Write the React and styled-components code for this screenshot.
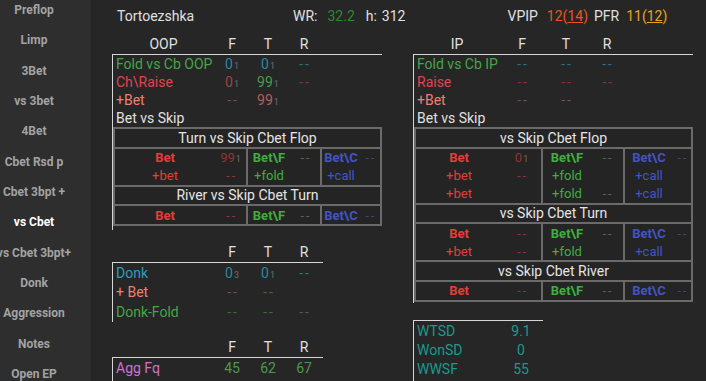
import React from 'react'
import styled, { createGlobalStyle } from 'styled-components'

const GlobalStyle = createGlobalStyle`
  html, body {
    margin: 0;
    padding: 0;
    background: #262626;
  }
  body {
    font-family: Roboto, "Liberation Sans", sans-serif;
    overflow: hidden;
  }
`

const Page = styled.div`
  display: flex;
  width: 706px;
  height: 381px;
  overflow: hidden;
  background: #262626;
  color: #e0e0e0;
`

const Sidebar = styled.nav`
  flex: 0 0 91px;
  background: #2e2e2e;
  border-right: 1px solid #232323;
  overflow: hidden;
`

const NavList = styled.div`
  display: flex;
  flex-direction: column;
  margin-top: -5px;
`

const NavItem = styled.div`
  width: 68px;
  height: 30.33px;
  display: flex;
  align-items: center;
  justify-content: center;
  white-space: nowrap;
  font-size: 12px;
  font-weight: 700;
  color: ${p => (p.$active ? '#ffffff' : '#a3a3a3')};
`

const Main = styled.main`
  flex: 1;
  padding: 6px 0 0 20px;
`

const TopBar = styled.div`
  display: flex;
  align-items: center;
  height: 20px;
  padding-left: 5px;
  font-size: 14px;
  white-space: nowrap;
`

const Name = styled.span`
  width: 176px;
  color: #e0e0e0;
`

const Stat = styled.span`
  margin-left: ${p => p.$ml || 0}px;
  color: ${p => p.$c || '#e0e0e0'};
`

const U = styled.span`
  text-decoration: underline;
`

const Columns = styled.div`
  display: flex;
  align-items: flex-start;
  gap: 31px;
  margin-top: 8px;
`

const Column = styled.div`
  display: flex;
  flex-direction: column;
  width: ${p => p.$w}px;
`

const HeadRow = styled.div`
  display: grid;
  grid-template-columns: ${p => p.$cols};
  height: 20px;
  align-items: center;
  padding-left: 1px;
  margin-top: ${p => p.$mt || 0}px;
  text-align: center;
  font-size: 14px;
  color: #e0e0e0;
`

const Box = styled.div`
  border-top: 1px solid #d6d6d6;
  border-left: 1px solid #d6d6d6;
  width: ${p => (p.$w ? `${p.$w}px` : 'auto')};
  margin-top: ${p => p.$mt || 0}px;
  padding-bottom: ${p => p.$pb || 0}px;
`

const Row = styled.div`
  display: grid;
  grid-template-columns: ${p => p.$cols};
  height: ${p => p.$h || 18}px;
  align-items: center;
  font-size: 14px;
  white-space: nowrap;
`

const Label = styled.span`
  padding-left: 3px;
  color: ${p => p.$c};
`

const Val = styled.span`
  text-align: center;
  color: ${p => p.$c};
  letter-spacing: ${p => (p.$dash ? '2px' : 'normal')};
  padding-left: ${p => (p.$dash ? '2px' : '0')};
`

const Sub = styled.span`
  font-size: 9px;
  color: #6e6e6e;
  margin-left: 1px;
`

const Grid = styled.div`
  display: grid;
  grid-template-columns: ${p => p.$cols};
  gap: 2px;
  border: 2px solid #6a6a6a;
  background: #6a6a6a;
`

const GridTitle = styled.div`
  grid-column: 1 / -1;
  height: 17.5px;
  display: flex;
  align-items: center;
  justify-content: center;
  background: #242424;
  font-size: 14px;
  color: #e4e4e4;
`

const Cell = styled.div`
  display: grid;
  grid-template-columns: ${p => p.$cols};
  grid-auto-rows: 18px;
  align-items: center;
  background: #242424;
  font-size: 13px;
  white-space: nowrap;
`

const CellLabel = styled.span`
  text-align: center;
  font-weight: ${p => (p.$bold ? 700 : 400)};
  color: ${p => p.$c};
`

const C = {
  green: '#46a546',
  red: '#e0434f',
  salmon: '#ee8070',
  white: '#e0e0e0',
  cyan: '#2a9fbc',
  cyanDim: '#2a88a2',
  cyanDash: '#2a6f88',
  redDim: '#a34242',
  redDash: '#853434',
  greenVal: '#4a9a4a',
  salmonDim: '#b85c5c',
  greyDash: '#6a5252',
  greenDash: '#3a6c3a',
  betRed: '#e63c3c',
  betRedDim: '#8e3636',
  betGreen: '#3fae3f',
  betGreenDim: '#3b743b',
  betBlue: '#4354c4',
  betBlueDim: '#3a4686',
  pink: '#d46fd4',
  teal: '#199a8c',
}

const nav = [
  'Preflop', 'Limp', '3Bet', 'vs 3bet', '4Bet', 'Cbet Rsd p', 'Cbet 3bpt +',
  'vs Cbet', 'vs Cbet 3bpt+', 'Donk', 'Aggression', 'Notes', 'Open EP',
]

const OOP_COLS = '101px 36px 36px 36px'
const IP_COLS = '86px 44px 44px 38px'

const V = ({ v, sub, c }) => (
  <Val $c={c} $dash={v === '--'}>
    {v}
    {sub && <Sub>{sub}</Sub>}
  </Val>
)

const StatRows = ({ cols, rows, h }) =>
  rows.map(r => (
    <Row key={r.label} $cols={cols} $h={h}>
      <Label $c={r.c}>{r.label}</Label>
      {r.vals.map((v, i) => (
        <V key={i} {...v} />
      ))}
    </Row>
  ))

const BetCells = ({ cols, cells }) =>
  cells.map((cell, i) => (
    <Cell key={i} $cols={cols[i]}>
      {cell.lines.map((ln, j) => (
        <React.Fragment key={j}>
          <CellLabel $bold={j === 0} $c={cell.c}>{ln[0]}</CellLabel>
          <V v={ln[1]} sub={ln[2]} c={cell.dim} />
        </React.Fragment>
      ))}
    </Cell>
  ))

const red = lines => ({ c: C.betRed, dim: C.betRedDim, lines })
const green = lines => ({ c: C.betGreen, dim: C.betGreenDim, lines })
const blue = lines => ({ c: C.betBlue, dim: C.betBlueDim, lines })

const oopRows = [
  {
    label: 'Fold vs Cb OOP', c: C.green,
    vals: [{ v: '0', sub: '1', c: C.cyanDim }, { v: '0', sub: '1', c: C.cyanDim }, { v: '--', c: C.cyanDash }],
  },
  {
    label: 'Ch\\Raise', c: C.red,
    vals: [{ v: '0', sub: '1', c: C.redDim }, { v: '99', sub: '1', c: C.greenVal }, { v: '--', c: C.redDash }],
  },
  {
    label: '+Bet', c: C.salmon,
    vals: [{ v: '--', c: C.greyDash }, { v: '99', sub: '1', c: C.salmonDim }],
  },
  { label: 'Bet vs Skip', c: C.white, vals: [] },
]

const ipRows = [
  {
    label: 'Fold vs Cb IP', c: C.green,
    vals: [{ v: '--', c: C.cyanDash }, { v: '--', c: C.cyanDash }, { v: '--', c: C.cyanDash }],
  },
  {
    label: 'Raise', c: C.red,
    vals: [{ v: '--', c: C.redDash }, { v: '--', c: C.redDash }, { v: '--', c: C.redDash }],
  },
  {
    label: '+Bet', c: C.salmon,
    vals: [{ v: '--', c: C.greyDash }, { v: '--', c: C.greyDash }],
  },
  { label: 'Bet vs Skip', c: C.white, vals: [] },
]

const donkRows = [
  {
    label: 'Donk', c: C.cyan,
    vals: [{ v: '0', sub: '3', c: C.cyanDim }, { v: '0', sub: '1', c: C.cyanDim }, { v: '--', c: C.cyanDash }],
  },
  {
    label: '+ Bet', c: C.salmon,
    vals: [{ v: '--', c: C.greyDash }, { v: '--', c: C.greyDash }],
  },
  {
    label: 'Donk-Fold', c: C.green,
    vals: [{ v: '--', c: C.greenDash }, { v: '--', c: C.greenDash }, { v: '--', c: C.greenDash }],
  },
]

const aggRows = [
  {
    label: 'Agg Fq', c: C.pink,
    vals: [{ v: '45', c: C.greenVal }, { v: '62', c: C.greenVal }, { v: '67', c: C.greenVal }],
  },
]

const sdRows = [
  { label: 'WTSD', c: C.teal, vals: [{ v: '9.1', c: C.teal }] },
  { label: 'WonSD', c: C.teal, vals: [{ v: '0', c: C.teal }] },
  { label: 'WWSF', c: C.teal, vals: [{ v: '55', c: C.teal }] },
]

const OOP_CELLS = ['100px 31px', '42px 30px', '38px 20px']
const IP_CELLS = ['86px 39px', '48px 32px', '48px 18px']

export default function App() {
  return (
    <Page>
      <GlobalStyle />
      <Sidebar>
        <NavList>
          {nav.map(n => (
            <NavItem key={n} $active={n === 'vs Cbet'}>{n}</NavItem>
          ))}
        </NavList>
      </Sidebar>
      <Main>
        <TopBar>
          <Name>Tortoezshka</Name>
          <Stat>WR:</Stat>
          <Stat $ml={10} $c="#2b8a2b">32.2</Stat>
          <Stat $ml={11}>h:</Stat>
          <Stat $ml={5}>312</Stat>
          <Stat $ml={102}>VPIP</Stat>
          <Stat $ml={9} $c="#e8561f">12(<U>14</U>)</Stat>
          <Stat $ml={6}>PFR</Stat>
          <Stat $ml={7} $c="#e9a322">11(<U>12</U>)</Stat>
        </TopBar>
        <Columns>
          <Column $w={270}>
            <HeadRow $cols={OOP_COLS}>
              <span>OOP</span><span>F</span><span>T</span><span>R</span>
            </HeadRow>
            <Box $pb={4}>
              <StatRows cols={OOP_COLS} rows={oopRows} />
              <Grid $cols="131px 72px 58px">
                <GridTitle>Turn vs Skip Cbet Flop</GridTitle>
                <BetCells
                  cols={OOP_CELLS}
                  cells={[
                    red([['Bet', '99', '1'], ['+bet', '--']]),
                    green([['Bet\\F', '--'], ['+fold']]),
                    blue([['Bet\\C', '--'], ['+call']]),
                  ]}
                />
                <GridTitle>River vs Skip Cbet Turn</GridTitle>
                <BetCells
                  cols={OOP_CELLS}
                  cells={[red([['Bet', '--']]), green([['Bet\\F', '--']]), blue([['Bet\\C', '--']])]}
                />
              </Grid>
            </Box>
            <HeadRow $cols={OOP_COLS} $mt={12}>
              <span /><span>F</span><span>T</span><span>R</span>
            </HeadRow>
            <Box $w={210}>
              <StatRows cols={OOP_COLS} rows={donkRows} h={19.5} />
            </Box>
            <HeadRow $cols={OOP_COLS} $mt={15.5}>
              <span /><span>F</span><span>T</span><span>R</span>
            </HeadRow>
            <Box $w={210} $pb={6}>
              <StatRows cols={OOP_COLS} rows={aggRows} h={19.5} />
            </Box>
          </Column>
          <Column $w={280}>
            <HeadRow $cols={IP_COLS}>
              <span>IP</span><span>F</span><span>T</span><span>R</span>
            </HeadRow>
            <Box $pb={1}>
              <StatRows cols={IP_COLS} rows={ipRows} />
              <Grid $cols="125px 80px 66px">
                <GridTitle>vs Skip Cbet Flop</GridTitle>
                <BetCells
                  cols={IP_CELLS}
                  cells={[
                    red([['Bet', '0', '1'], ['+bet', '--'], ['+bet']]),
                    green([['Bet\\F', '--'], ['+fold'], ['+fold', '--']]),
                    blue([['Bet\\C', '--'], ['+call'], ['+call']]),
                  ]}
                />
                <GridTitle>vs Skip Cbet Turn</GridTitle>
                <BetCells
                  cols={IP_CELLS}
                  cells={[
                    red([['Bet', '--'], ['+bet', '--']]),
                    green([['Bet\\F', '--'], ['+fold']]),
                    blue([['Bet\\C', '--'], ['+call']]),
                  ]}
                />
                <GridTitle>vs Skip Cbet River</GridTitle>
                <BetCells
                  cols={IP_CELLS}
                  cells={[red([['Bet', '--']]), green([['Bet\\F', '--']]), blue([['Bet\\C', '--']])]}
                />
              </Grid>
            </Box>
            <Box $w={129} $mt={17.5} $pb={4}>
              <StatRows cols="86px 42px" rows={sdRows} h={19} />
            </Box>
          </Column>
        </Columns>
      </Main>
    </Page>
  )
}
